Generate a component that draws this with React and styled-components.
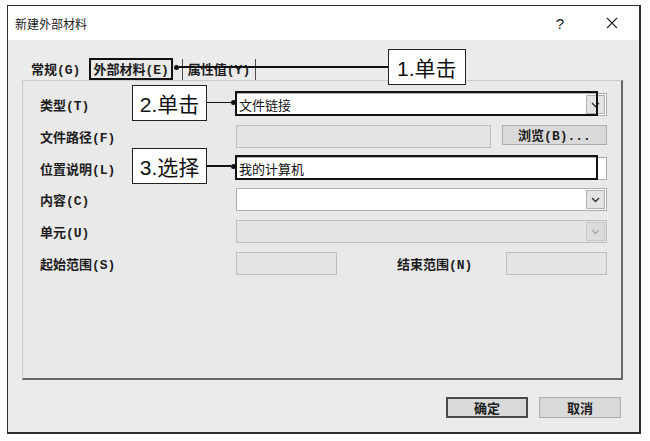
import React from "react";
import styled, { createGlobalStyle } from "styled-components";

const GlobalStyle = createGlobalStyle`
  body {
    margin: 0;
    background: #ffffff;
    font-family: "Noto Sans CJK SC", "Liberation Sans", sans-serif;
  }
`;

const Page = styled.div`
  padding: 5px 0 0 7px;
`;

const Window = styled.div`
  box-sizing: border-box;
  width: 634px;
  height: 429px;
  border: 1px solid #2e2e2e;
  border-right-width: 2px;
  border-bottom-width: 2px;
  background: #ebebeb;
  display: flex;
  flex-direction: column;
`;

const TitleBar = styled.div`
  height: 34px;
  background: #ffffff;
  display: flex;
  align-items: center;
  padding: 0 21px 0 7px;
  font-size: 12px;
  color: #1a1a1a;
`;

const Title = styled.span`
  flex: 1;
`;

const Help = styled.span`
  font-family: "Liberation Sans", sans-serif;
  font-size: 15px;
  margin-right: 42px;
`;

const Body = styled.div`
  flex: 1;
  display: flex;
  flex-direction: column;
  padding: 0 16px 0 14px;
`;

const TabRow = styled.div`
  height: 40px;
  display: flex;
  align-items: flex-end;
  padding-left: 3px;
  position: relative;
  z-index: 1;
`;

const Tab = styled.div`
  position: relative;
  box-sizing: border-box;
  height: ${(p) => (p.$active ? "22px" : "21px")};
  margin-left: ${(p) => p.$gap || 0}px;
  padding: 0 ${(p) => (p.$active ? 4 : 5)}px 2px;
  display: flex;
  align-items: center;
  font-family: "Liberation Mono", "Noto Sans CJK SC", monospace;
  font-size: 13px;
  font-weight: 700;
  color: #1c1c1c;
  background: ${(p) => (p.$active ? "#e9e9e9" : "transparent")};
  border-left: 1px solid ${(p) => (p.$edged ? "#4a4a4a" : "transparent")};
  border-right: 1px solid ${(p) => (p.$edged ? "#4a4a4a" : "transparent")};
`;

const Highlight = styled.div`
  position: absolute;
  top: ${(p) => p.$top ?? 0}px;
  left: ${(p) => p.$left ?? 0}px;
  right: ${(p) => p.$right ?? 0}px;
  bottom: ${(p) => p.$bottom ?? 0}px;
  border: 2px solid #111;
  pointer-events: none;
  z-index: 2;
`;

const Callout = styled.div`
  position: absolute;
  top: 50%;
  transform: translateY(-50%);
  margin-top: -2px;
  display: flex;
  align-items: center;
  z-index: 3;
  ${(p) =>
    p.$side === "left"
      ? "right: calc(100% + 1px); flex-direction: row-reverse;"
      : "left: calc(100% + 1px);"}
`;

const Dot = styled.span`
  width: 5px;
  height: 5px;
  border-radius: 50%;
  background: #111;
  flex: none;
`;

const Line = styled.span`
  width: ${(p) => p.$w}px;
  height: 1.5px;
  background: #111;
  flex: none;
`;

const NoteBox = styled.div`
  box-sizing: border-box;
  width: ${(p) => p.$w || 75}px;
  height: 36px;
  border: 1px solid #222;
  background: #ffffff;
  display: flex;
  align-items: center;
  justify-content: center;
  font-family: "Liberation Sans", "Noto Sans CJK SC", sans-serif;
  font-size: 21px;
  font-weight: 400;
  color: #111;
  flex: none;
`;

const Panel = styled.div`
  box-sizing: border-box;
  height: 300px;
  background: #e9e9e9;
  border-top: 1px solid #c9c9c9;
  border-left: 1px solid #c9c9c9;
  border-right: 2px solid #686868;
  border-bottom: 2px solid #686868;
  padding: 12px 14px 0 17px;
`;

const Form = styled.div`
  display: grid;
  grid-template-columns: 196px 1fr;
  grid-auto-rows: 23px;
  row-gap: 8.8px;
`;

const Label = styled.div`
  display: flex;
  align-items: center;
  font-family: "Liberation Mono", "Noto Sans CJK SC", monospace;
  font-size: 13px;
  font-weight: 700;
  color: #1c1c1c;
  white-space: nowrap;
  margin-left: ${(p) => p.$ml || 0}px;
`;

const Line2 = styled.div`
  display: flex;
  align-items: stretch;
`;

const Field = styled.div`
  position: relative;
  box-sizing: border-box;
  ${(p) => (p.$w ? `width: ${p.$w}px; flex: none;` : "flex: 1;")}
  margin-left: ${(p) => (p.$push ? "auto" : "0")};
  border: 1px solid ${(p) => (p.$disabled ? "#bdbdbd" : "#adadad")};
  background: ${(p) => (p.$disabled ? "#e4e4e4" : "#ffffff")};
  display: flex;
  align-items: stretch;
  padding: 1px;
`;

const FieldText = styled.div`
  flex: 1;
  display: flex;
  align-items: center;
  padding-left: 1px;
  font-size: 13px;
  color: #111;
`;

const DropBtn = styled.div`
  box-sizing: border-box;
  width: 19px;
  border: 1px solid ${(p) => (p.$disabled ? "#c8c8c8" : "#b0b0b0")};
  background: ${(p) => (p.$disabled ? "#dcdcdc" : "#e3e3e3")};
  display: flex;
  align-items: center;
  justify-content: center;
`;

const Button = styled.div`
  box-sizing: border-box;
  width: ${(p) => p.$w}px;
  height: ${(p) => p.$h || 21}px;
  margin-left: ${(p) => (p.$push ? "auto" : "0")};
  align-self: flex-start;
  display: flex;
  align-items: center;
  justify-content: center;
  background: #d9d9d9;
  border: ${(p) => (p.$default ? "2px solid #4a4a4a" : "1px solid #adadad")};
  font-family: "Liberation Mono", "Noto Sans CJK SC", monospace;
  font-size: 13px;
  font-weight: 700;
  color: #1c1c1c;
`;

const ButtonRow = styled.div`
  display: flex;
  justify-content: flex-end;
  gap: 11px;
  margin-top: 17px;
  padding-right: 2px;
`;

const Chevron = ({ disabled }) => (
  <svg width="9" height="6" viewBox="0 0 9 6">
    <path
      d="M1 1 L4.5 4.5 L8 1"
      fill="none"
      stroke={disabled ? "#a8a8a8" : "#333"}
      strokeWidth="1.4"
    />
  </svg>
);

const CloseIcon = () => (
  <svg width="12" height="12" viewBox="0 0 12 12">
    <path d="M1 1 L11 11 M11 1 L1 11" stroke="#222" strokeWidth="1.1" />
  </svg>
);

const Note = ({ side, line, text }) => (
  <Callout $side={side}>
    <Dot />
    <Line $w={line} />
    <NoteBox $w={side === "left" ? 75 : 78}>{text}</NoteBox>
  </Callout>
);

const Combo = ({ text, disabled, children }) => (
  <Field $disabled={disabled}>
    <FieldText>{text}</FieldText>
    <DropBtn $disabled={disabled}>
      <Chevron disabled={disabled} />
    </DropBtn>
    {children}
  </Field>
);

export default function App() {
  return (
    <Page>
      <GlobalStyle />
      <Window>
        <TitleBar>
          <Title>新建外部材料</Title>
          <Help>?</Help>
          <CloseIcon />
        </TitleBar>
        <Body>
          <TabRow>
            <Tab>常规(G)</Tab>
            <Tab $active $gap={2}>
              外部材料(E)
              <Highlight />
              <Note side="right" line={209} text="1.单击" />
            </Tab>
            <Tab $edged $gap={8}>属性值(Y)</Tab>
          </TabRow>
          <Panel>
            <Form>
              <Label>类型(T)</Label>
              <Combo text="文件链接">
                <Highlight $top={-3} $left={-2} $right={8} $bottom={-1} />
                <Note side="left" line={24} text="2.单击" />
              </Combo>

              <Label>文件路径(F)</Label>
              <Line2>
                <Field $disabled $w={255} />
                <Button $w={105} $h={20} $push>
                  浏览(B)...
                </Button>
              </Line2>

              <Label>位置说明(L)</Label>
              <Field>
                <FieldText>我的计算机</FieldText>
                <Highlight $top={-3} $left={-2} $right={8} $bottom={-1} />
                <Note side="left" line={24} text="3.选择" />
              </Field>

              <Label>内容(C)</Label>
              <Combo text="" />

              <Label>单元(U)</Label>
              <Combo text="" disabled />

              <Label>起始范围(S)</Label>
              <Line2>
                <Field $disabled $w={101} />
                <Label $ml={60}>结束范围(N)</Label>
                <Field $disabled $w={101} $push />
              </Line2>
            </Form>
          </Panel>
          <ButtonRow>
            <Button $w={82} $default>
              确定
            </Button>
            <Button $w={82}>取消</Button>
          </ButtonRow>
        </Body>
      </Window>
    </Page>
  );
}
